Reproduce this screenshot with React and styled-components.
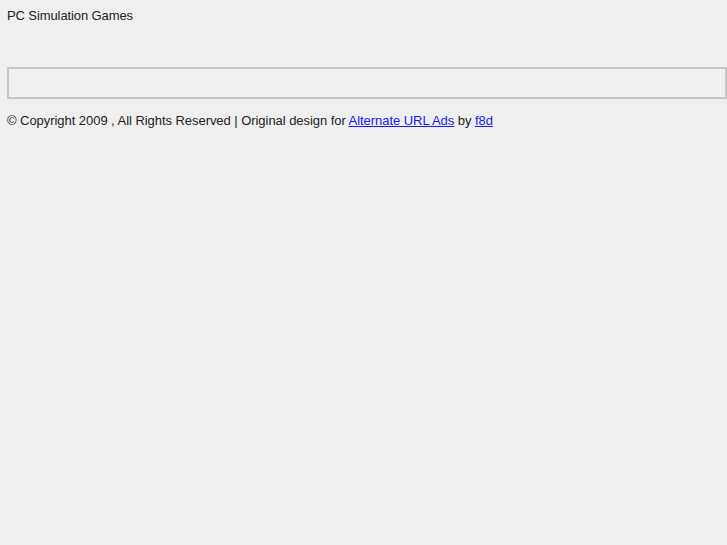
import React from "react";
import styled, { createGlobalStyle } from "styled-components";

const Global = createGlobalStyle`
  html, body { margin: 0; padding: 0; background: #efefef; }
  body { font-family: "Liberation Sans", Arial, sans-serif; font-size: 13px; color: #222; }
`;

const Page = styled.div`
  padding: 8px 0 0 7px;
`;

const Title = styled.div`
  font-size: 13px;
  line-height: 15px;
  letter-spacing: -0.1px;
  color: #222;
`;

const Panel = styled.div`
  margin-top: 44px;
  width: 716px;
  height: 28px;
  border: 2px solid #c6c6c6;
  background: #f0f0f0;
`;

const Footer = styled.div`
  margin-top: 14px;
  font-size: 13px;
  line-height: 15px;
  letter-spacing: -0.05px;
  color: #222;
`;

const Link = styled.a`
  color: #1a1aee;
  text-decoration: underline;
`;

export default function App() {
  return (
    <>
      <Global />
      <Page>
        <Title>PC Simulation Games</Title>
        <Panel />
        <Footer>
          © Copyright 2009 , All Rights Reserved | Original design for{" "}
          <Link href="#">Alternate URL Ads</Link> by <Link href="#">f8d</Link>
        </Footer>
      </Page>
    </>
  );
}
